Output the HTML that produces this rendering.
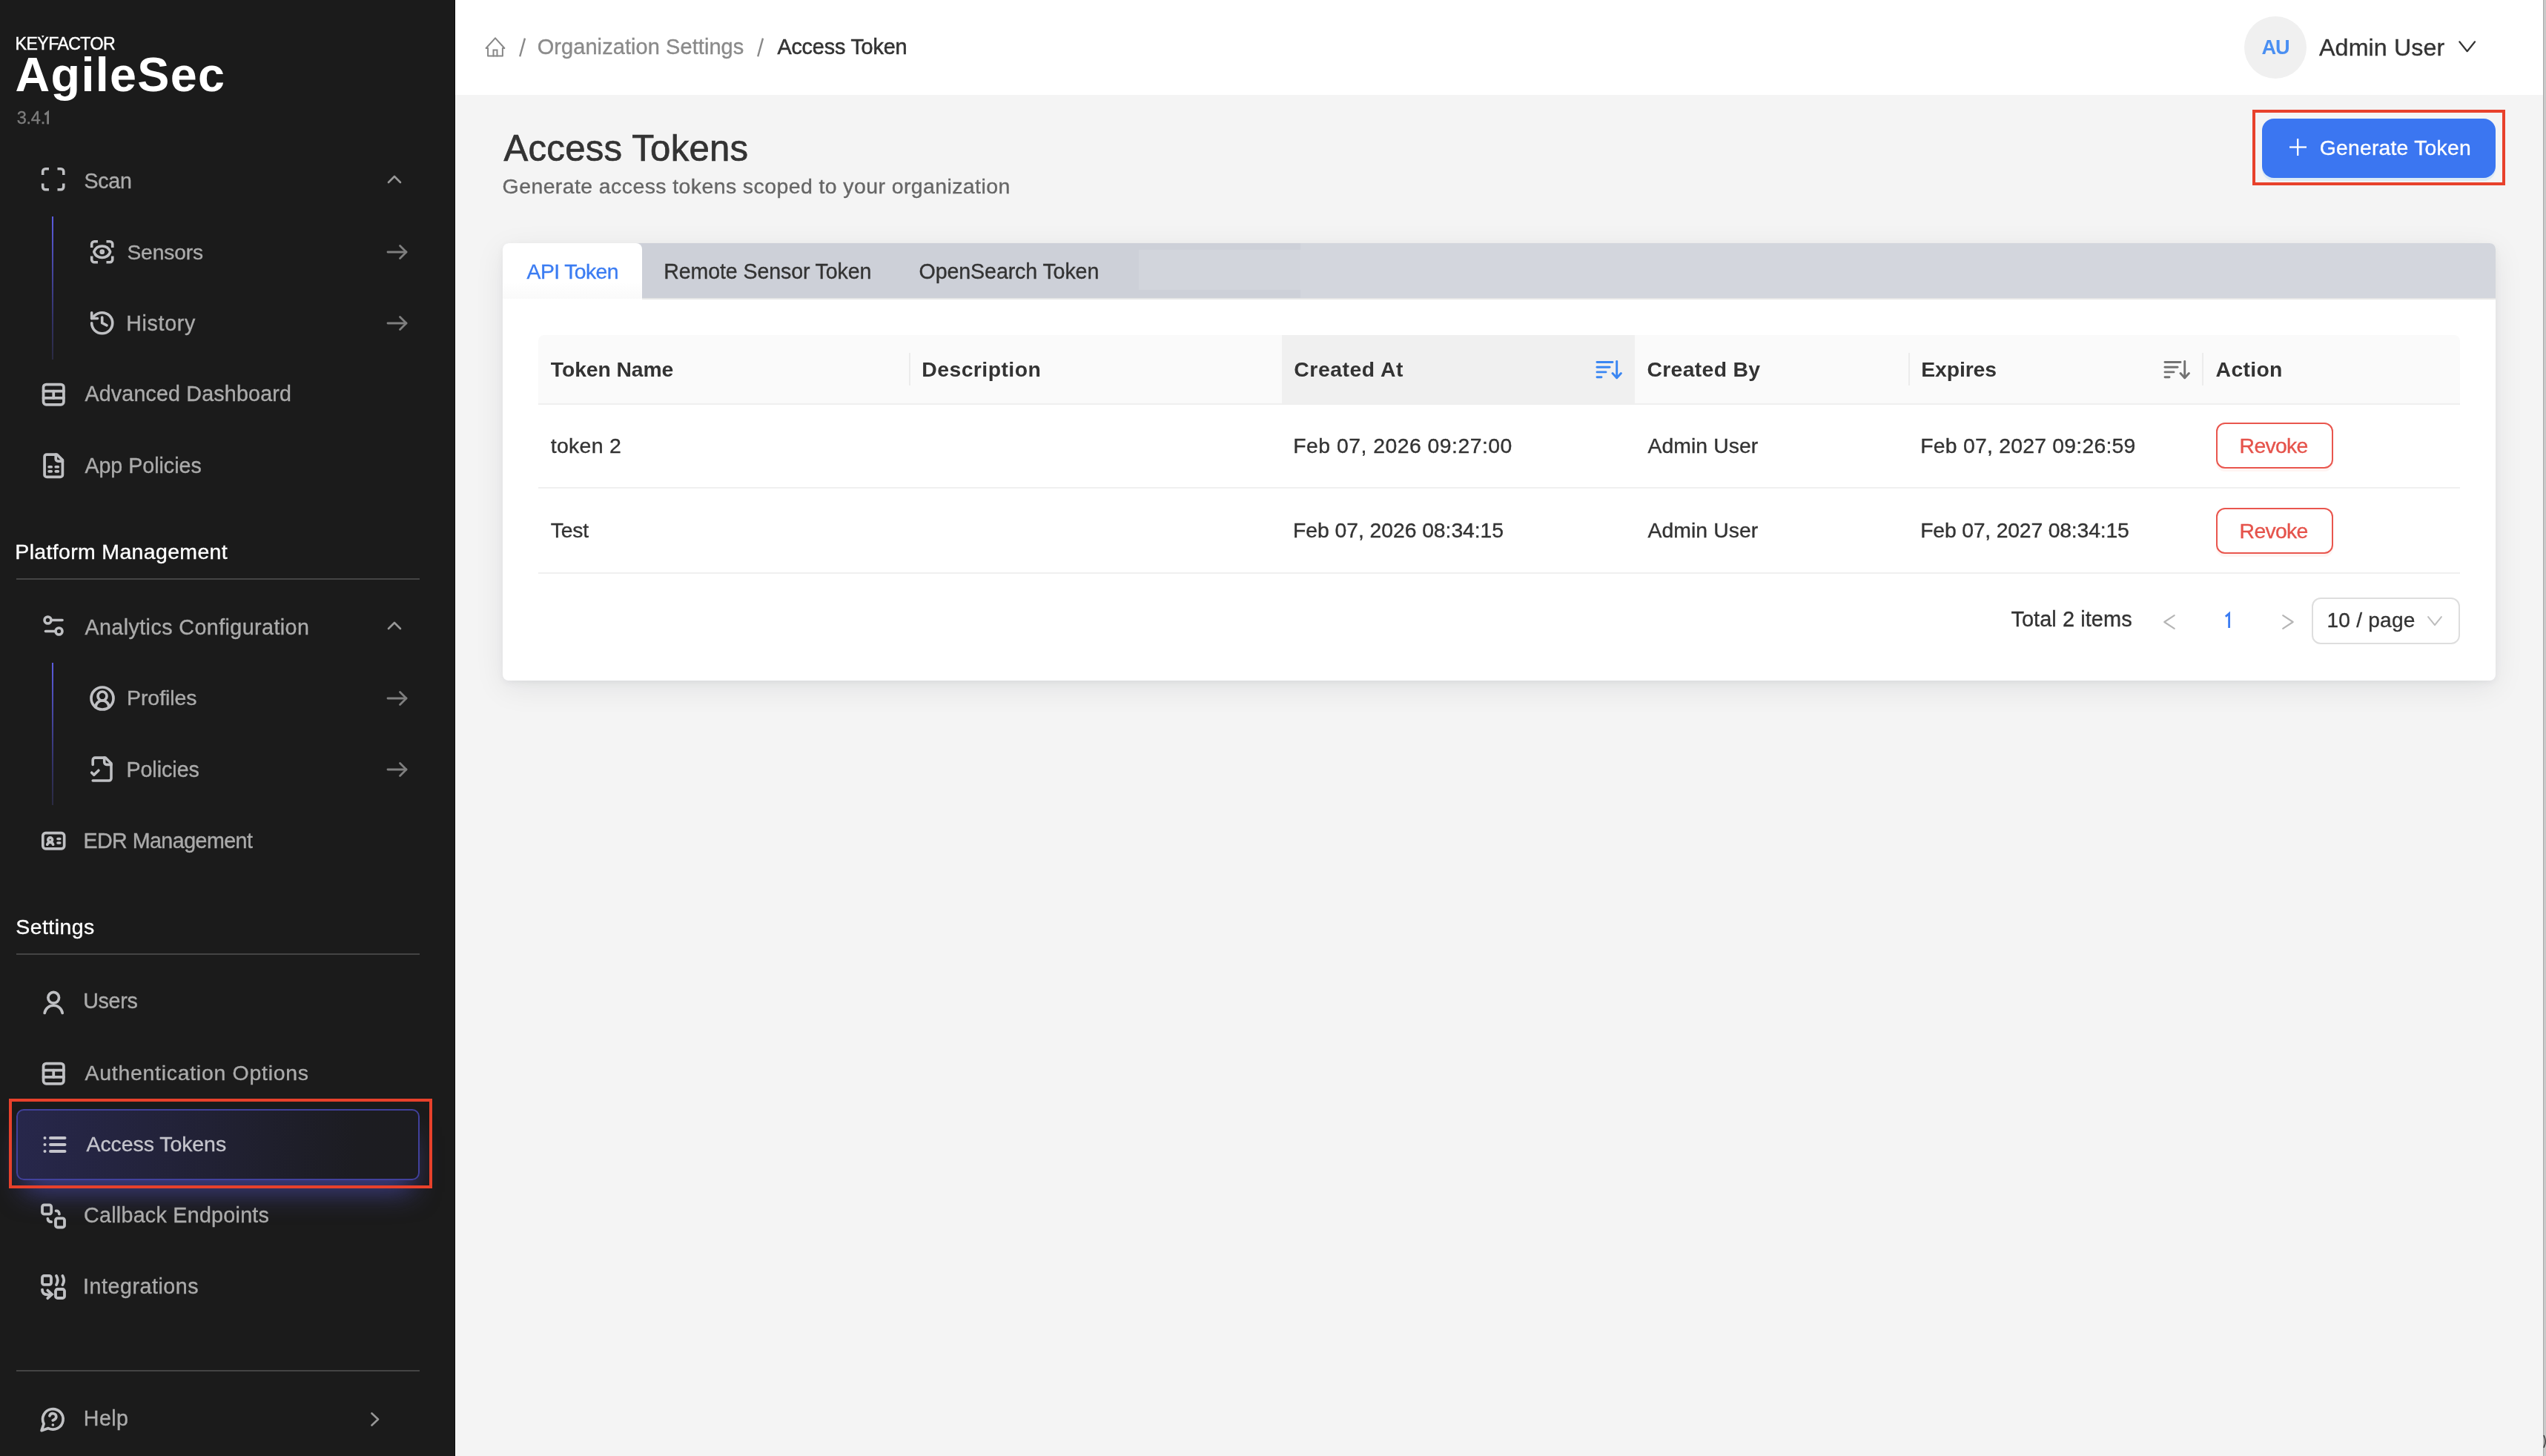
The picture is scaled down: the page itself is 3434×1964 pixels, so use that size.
<!DOCTYPE html>
<html><head><meta charset="utf-8">
<style>
html,body{margin:0;padding:0;width:3434px;height:1964px;overflow:hidden;background:#f4f4f4;font-family:"Liberation Sans",sans-serif;}
.abs{position:absolute;}
.tx{position:absolute;white-space:nowrap;font-family:"Liberation Sans",sans-serif;-webkit-text-stroke:0.35px currentColor;}
.b{-webkit-text-stroke:0;}
.med{-webkit-text-stroke:0.7px #333;}
.semi{-webkit-text-stroke:0.55px #333;}
.kf{-webkit-text-stroke:0.45px #fff;}
.ver{-webkit-text-stroke:0.35px #7d7d7d;}
.ic{position:absolute;overflow:visible;}
#sb{position:absolute;left:0;top:0;width:613px;height:1964px;background:#1b1b1b;border-right:1px solid #0c0c0c;}
#hdr{position:absolute;left:614px;top:0;width:2816px;height:128px;background:#ffffff;}
#scroll{position:absolute;left:3430px;top:0;width:4px;height:1964px;background:#c9c9c9;border-left:1px solid #a9a9a9;box-sizing:border-box;}
.vline{position:absolute;width:2px;}
.divider{position:absolute;left:22px;width:544px;height:2px;background:#444444;}
#active{position:absolute;left:22px;top:1496px;width:544px;height:96px;box-sizing:border-box;border:2px solid #41419c;border-radius:10px;
  background:linear-gradient(90deg,#27274b 0%,#222238 40%,#1c1c21 85%,#1c1c20 100%);box-shadow:0 26px 36px -10px rgba(90,90,220,0.55);}
.redbox{position:absolute;border:4px solid #e8412b;box-sizing:border-box;}
#card{position:absolute;left:678px;top:328px;width:2688px;height:590px;background:#fff;border-radius:8px;
  box-shadow:0 3px 10px rgba(10,20,40,0.05), 0 10px 40px rgba(10,20,40,0.08);}
#tabbar{position:absolute;left:678px;top:328px;width:2688px;height:74px;background:linear-gradient(90deg,#cdd0d8 0,#cdd0d8 1076px,#d3d6dd 1076px);border-radius:8px 8px 0 0;}
#tabline{position:absolute;left:866px;top:402px;width:2500px;height:2px;background:#e6e6e6;}
#tabact{position:absolute;left:678px;top:328px;width:188px;height:75px;background:linear-gradient(#fff 70%,#fafafa);border-radius:8px 8px 0 0;}
#tabfade{position:absolute;left:1536px;top:337px;width:218px;height:54px;background:#d2d5dc;}
#thead{position:absolute;left:726px;top:452px;width:2592px;height:92px;background:#fafafa;border-radius:8px 8px 0 0;border-bottom:2px solid #efefef;}
#sortcol{position:absolute;left:1729px;top:452px;width:476px;height:92px;background:#f0f0f0;}
.sep{position:absolute;top:476px;width:2px;height:44px;background:#ececec;}
.rowline{position:absolute;left:726px;width:2592px;height:2px;background:#f0f0f0;}
.revoke{position:absolute;left:2989px;width:158px;height:62px;box-sizing:border-box;border:2px solid #e9564e;border-radius:12px;background:#fff;box-shadow:0 4px 0 rgba(255,38,5,0.05);}
#btn{position:absolute;left:3051px;top:160px;width:315px;height:80px;background:#3b76f1;border-radius:16px;box-shadow:0 4px 0 rgba(5,145,255,0.1);}
#avatar{position:absolute;left:3027px;top:22px;width:84px;height:84px;border-radius:50%;background:#f0f0f0;}
#select{position:absolute;left:3118px;top:806px;width:200px;height:63px;box-sizing:border-box;border:2px solid #dedede;border-radius:12px;background:#fff;}
</style></head><body>
<div id="sb"></div>
<div id="hdr"></div>
<div id="scroll"></div>
<div class="vline" style="left:70px;top:292px;height:193px;background:linear-gradient(#5c5ce0,#33336a 70%,#2a2a40);"></div>
<div class="vline" style="left:70px;top:894px;height:192px;background:linear-gradient(#5c5ce0,#33336a 70%,#2a2a40);"></div>
<div class="divider" style="top:780px"></div>
<div class="divider" style="top:1286px"></div>
<div class="divider" style="top:1848px"></div>
<div id="active"></div>
<div class="redbox" style="left:12px;top:1482px;width:571px;height:121px"></div>
<div id="card"></div>
<div id="tabbar"></div>
<div id="tabfade"></div>
<div id="tabline"></div>
<div id="tabact"></div>
<div id="thead"></div>
<div id="sortcol"></div>
<div class="sep" style="left:1226px"></div>
<div class="sep" style="left:2574px"></div>
<div class="sep" style="left:2970px"></div>
<div class="rowline" style="top:657px"></div>
<div class="rowline" style="top:772px"></div>
<div class="revoke" style="top:570px"></div>
<div class="revoke" style="top:685px"></div>
<div id="select"></div>
<div id="btn"></div>
<div class="redbox" style="left:3038px;top:148px;width:341px;height:102px"></div>
<div id="avatar"></div>
<svg class="ic" style="left:53.28px;top:223.28px;width:37.44px;height:37.44px" viewBox="0 0 24 24" fill="none" stroke="#bfc0c3" stroke-width="2.3" stroke-linecap="round" stroke-linejoin="round"><path stroke-linecap="butt" d="M3 8.3V5.3a2.3 2.3 0 0 1 2.3-2.3h3"/><path stroke-linecap="butt" d="M15.7 3h3a2.3 2.3 0 0 1 2.3 2.3v3"/><path stroke-linecap="butt" d="M21 15.7v3a2.3 2.3 0 0 1-2.3 2.3h-3"/><path stroke-linecap="butt" d="M8.3 21H5.3a2.3 2.3 0 0 1-2.3-2.3v-3"/></svg>
<svg class="ic" style="left:119.28px;top:321.28px;width:37.44px;height:37.44px" viewBox="0 0 24 24" fill="none" stroke="#bfc0c3" stroke-width="2.3" stroke-linecap="round" stroke-linejoin="round"><path stroke-linecap="butt" d="M3 8.3V5.3a2.3 2.3 0 0 1 2.3-2.3h3"/><path stroke-linecap="butt" d="M15.7 3h3a2.3 2.3 0 0 1 2.3 2.3v3"/><path stroke-linecap="butt" d="M21 15.7v3a2.3 2.3 0 0 1-2.3 2.3h-3"/><path stroke-linecap="butt" d="M8.3 21H5.3a2.3 2.3 0 0 1-2.3-2.3v-3"/><circle cx="12" cy="12" r="1"/><path d="M18.944 12.33a1 1 0 0 0 0-.66 7.5 7.5 0 0 0-13.888 0 1 1 0 0 0 0 .66 7.5 7.5 0 0 0 13.888 0"/></svg>
<svg class="ic" style="left:119.28px;top:417.28px;width:37.44px;height:37.44px" viewBox="0 0 24 24" fill="none" stroke="#bfc0c3" stroke-width="2.3" stroke-linecap="round" stroke-linejoin="round"><path d="M3 12a9 9 0 1 0 9-9 9.75 9.75 0 0 0-6.74 2.74L3 8"/><path d="M3 3v5h5"/><path d="M12 7v5l4 2"/></svg>
<svg class="ic" style="left:53.76px;top:513.76px;width:36.48px;height:36.48px" viewBox="0 0 24 24" fill="none" stroke="#bfc0c3" stroke-width="2.45" stroke-linecap="round" stroke-linejoin="round"><rect x="3" y="3" width="18" height="18" rx="2.5"/><path d="M3 9h18"/><path d="M3 15h18"/><path d="M12 9v6"/></svg>
<svg class="ic" style="left:53.76px;top:609.76px;width:36.48px;height:36.48px" viewBox="0 0 24 24" fill="none" stroke="#bfc0c3" stroke-width="2.45" stroke-linecap="round" stroke-linejoin="round"><path d="M15 2H6a2 2 0 0 0-2 2v16a2 2 0 0 0 2 2h12a2 2 0 0 0 2-2V7Z"/><path d="M14 2v4a2 2 0 0 0 2 2h4"/><path d="M8 13h2"/><path d="M14 13h2"/><path d="M8 17h2"/><path d="M14 17h2"/></svg>
<svg class="ic" style="left:54.00px;top:826.00px;width:36.00px;height:36.00px" viewBox="0 0 24 24" fill="none" stroke="#bfc0c3" stroke-width="2.4" stroke-linecap="round" stroke-linejoin="round"><path d="M20 7h-9"/><path d="M14 17H5"/><circle cx="17" cy="17" r="3"/><circle cx="7" cy="7" r="3"/></svg>
<svg class="ic" style="left:120.00px;top:924.00px;width:36.00px;height:36.00px" viewBox="0 0 24 24" fill="none" stroke="#bfc0c3" stroke-width="2.45" stroke-linecap="round" stroke-linejoin="round"><path d="M18 20a6 6 0 0 0-12 0"/><circle cx="12" cy="10" r="4"/><circle cx="12" cy="12" r="10"/></svg>
<svg class="ic" style="left:119.00px;top:1019.40px;width:37.20px;height:37.20px" viewBox="0 0 24 24" fill="none" stroke="#bfc0c3" stroke-width="2.3" stroke-linecap="round" stroke-linejoin="round"><path d="M4 22h14a2 2 0 0 0 2-2V7l-5-5H6a2 2 0 0 0-2 2v4"/><path d="M14 2v4a2 2 0 0 0 2 2h4"/><path d="m3 15 2 2 4-4"/></svg>
<svg class="ic" style="left:53.76px;top:1115.76px;width:36.48px;height:36.48px" viewBox="0 0 24 24" fill="none" stroke="#bfc0c3" stroke-width="2.4" stroke-linecap="round" stroke-linejoin="round"><rect x="2.5" y="5" width="19" height="14" rx="2.5"/><circle cx="9" cy="11" r="1.9"/><path d="M6.4 15.3a2.7 2.7 0 0 1 5.2 0"/><path d="M15.8 10.2h1.8"/><path d="M15.8 13.8h1.8"/></svg>
<svg class="ic" style="left:52.80px;top:1332.80px;width:38.40px;height:38.40px" viewBox="0 0 24 24" fill="none" stroke="#bfc0c3" stroke-width="2.3" stroke-linecap="round" stroke-linejoin="round"><circle cx="12" cy="8" r="4.6"/><path d="M4.5 20.9a7.6 7.6 0 0 1 15 0"/></svg>
<svg class="ic" style="left:53.76px;top:1429.76px;width:36.48px;height:36.48px" viewBox="0 0 24 24" fill="none" stroke="#bfc0c3" stroke-width="2.45" stroke-linecap="round" stroke-linejoin="round"><rect x="3" y="3" width="18" height="18" rx="2.5"/><path d="M3 9h18"/><path d="M3 15h18"/><path d="M12 9v6"/></svg>
<svg class="ic" style="left:56.00px;top:1526.10px;width:36.00px;height:36.00px" viewBox="0 0 24 24" fill="none" stroke="#c4c4cc" stroke-width="2.7" stroke-linecap="round" stroke-linejoin="round"><path d="M3 6h.01"/><path d="M3 12h.01"/><path d="M3 18h.01"/><path d="M8 6h13"/><path d="M8 12h13"/><path d="M8 18h13"/></svg>
<svg class="ic" style="left:55px;top:1622.5px;width:34px;height:36px" viewBox="0 0 34 36" fill="none" stroke="#bfc0c3" stroke-width="3.8" stroke-linecap="round" stroke-linejoin="round"><rect x="2" y="2.3" width="12.2" height="12.3" rx="2.6"/><rect x="20" y="20.3" width="12" height="12.2" rx="2.6"/><path d="M20.6 10.4Q24.6 10 24.9 14.6"/><path d="M9.4 20.9Q9.8 25.2 14.1 25.2"/></svg>
<svg class="ic" style="left:55px;top:1717px;width:34px;height:36px" viewBox="0 0 34 36" fill="none" stroke="#bfc0c3" stroke-width="3.8" stroke-linecap="round" stroke-linejoin="round"><rect x="2" y="3.8" width="12" height="12" rx="2.6"/><rect x="20" y="22" width="12" height="12" rx="2.6"/><path d="M21 4Q24.6 10 21 16"/><path d="M29.4 4Q33 10 29.4 16"/><path d="M2 22.6Q2 29.4 9 29.4H13.5"/><path d="M9.3 23.6L15 28.9L9.3 34.2" stroke-linejoin="miter"/></svg>
<svg class="ic" style="left:53.44px;top:1896.14px;width:36.72px;height:36.72px" viewBox="0 0 24 24" fill="none" stroke="#bfc0c3" stroke-width="2.4" stroke-linecap="round" stroke-linejoin="round"><path d="M7.9 20A9 9 0 1 0 4 16.1L2 22Z"/><path d="M9.09 9a3 3 0 0 1 5.83 1c0 2-3 3-3 3"/><path d="M12 17h.01"/></svg>
<svg class="ic" style="left:521px;top:234px;width:22px;height:16px" viewBox="0 0 22 16" fill="none" stroke="#979797" stroke-width="2.6" stroke-linecap="round" stroke-linejoin="round"><path d="M3 12 L11 4 L19 12"/></svg>
<svg class="ic" style="left:521px;top:836px;width:22px;height:16px" viewBox="0 0 22 16" fill="none" stroke="#979797" stroke-width="2.6" stroke-linecap="round" stroke-linejoin="round"><path d="M3 12 L11 4 L19 12"/></svg>
<svg class="ic" style="left:521px;top:329px;width:30px;height:22px" viewBox="0 0 30 22" fill="none" stroke="#7f7f7f" stroke-width="2.8" stroke-linecap="round" stroke-linejoin="round"><path d="M2 11H27"/><path d="M18.5 2.5L27 11l-8.5 8.5"/></svg>
<svg class="ic" style="left:521px;top:425px;width:30px;height:22px" viewBox="0 0 30 22" fill="none" stroke="#7f7f7f" stroke-width="2.8" stroke-linecap="round" stroke-linejoin="round"><path d="M2 11H27"/><path d="M18.5 2.5L27 11l-8.5 8.5"/></svg>
<svg class="ic" style="left:521px;top:931px;width:30px;height:22px" viewBox="0 0 30 22" fill="none" stroke="#7f7f7f" stroke-width="2.8" stroke-linecap="round" stroke-linejoin="round"><path d="M2 11H27"/><path d="M18.5 2.5L27 11l-8.5 8.5"/></svg>
<svg class="ic" style="left:521px;top:1027px;width:30px;height:22px" viewBox="0 0 30 22" fill="none" stroke="#7f7f7f" stroke-width="2.8" stroke-linecap="round" stroke-linejoin="round"><path d="M2 11H27"/><path d="M18.5 2.5L27 11l-8.5 8.5"/></svg>
<svg class="ic" style="left:499px;top:1904px;width:14px;height:21px" viewBox="0 0 14 21" fill="none" stroke="#979797" stroke-width="2.6" stroke-linecap="round" stroke-linejoin="round"><path d="M2.5 2.5L11 10.5L2.5 18.5"/></svg>
<svg class="ic" style="left:654px;top:50px;width:28px;height:27px" viewBox="0 0 28 27" fill="none" stroke="#888888" stroke-width="2.0" stroke-linecap="round" stroke-linejoin="round"><path d="M1.6 15 L14 1.3 L26.4 15 H23.9 V25.4 H4.1 V15 Z"/><path d="M11.5 25.4 V17.5 H16.5 V25.4" stroke-linejoin="miter"/></svg>
<svg class="ic" style="left:698.5px;top:50.5px;width:11px;height:26px" viewBox="0 0 11 26" fill="none" stroke="#888888" stroke-width="2.4" stroke-linecap="round" stroke-linejoin="round"><path stroke-linecap="butt" d="M9 0.6 L2.2 25.2"/></svg>
<svg class="ic" style="left:1019.8px;top:50.5px;width:11px;height:26px" viewBox="0 0 11 26" fill="none" stroke="#888888" stroke-width="2.4" stroke-linecap="round" stroke-linejoin="round"><path stroke-linecap="butt" d="M9 0.6 L2.2 25.2"/></svg>
<svg class="ic" style="left:3316px;top:54.5px;width:24px;height:17px" viewBox="0 0 24 17" fill="none" stroke="#333" stroke-width="2.2" stroke-linecap="round" stroke-linejoin="round"><path d="M1.3 1.3 L11.7 14.2 L22.1 1.3"/></svg>
<svg class="ic" style="left:3087.5px;top:187.2px;width:23px;height:23px" viewBox="0 0 23 23" fill="none" stroke="#fff" stroke-width="2.3" stroke-linecap="round" stroke-linejoin="round"><path stroke-linecap="butt" d="M11.2 0V23"/><path stroke-linecap="butt" d="M0 11.5H23"/></svg>
<svg class="ic" style="left:2152px;top:486px;width:37px;height:26px" viewBox="0 0 37 26" fill="none" stroke="#3a86f2" stroke-width="2.9" stroke-linecap="round" stroke-linejoin="round"><path d="M2 2.5H23"/><path d="M2 9.3H19"/><path d="M2 15.9H14"/><path d="M2 22.7H8"/><path d="M28.7 1.5V23.5"/><path d="M23 17.5L28.7 23.8L34.4 17.5"/></svg>
<svg class="ic" style="left:2918px;top:486px;width:37px;height:26px" viewBox="0 0 37 26" fill="none" stroke="#727272" stroke-width="2.9" stroke-linecap="round" stroke-linejoin="round"><path d="M2 2.5H23"/><path d="M2 9.3H19"/><path d="M2 15.9H14"/><path d="M2 22.7H8"/><path d="M28.7 1.5V23.5"/><path d="M23 17.5L28.7 23.8L34.4 17.5"/></svg>
<svg class="ic" style="left:2917.8px;top:829px;width:16px;height:20px" viewBox="0 0 16 20" fill="none" stroke="#b5b5b5" stroke-width="2.1" stroke-linecap="round" stroke-linejoin="round"><path d="M14.7 1.1L1.2 10L14.7 18.9"/></svg>
<svg class="ic" style="left:3078px;top:829px;width:16px;height:20px" viewBox="0 0 16 20" fill="none" stroke="#b5b5b5" stroke-width="2.1" stroke-linecap="round" stroke-linejoin="round"><path d="M1.2 1.1L14.7 10L1.2 18.9"/></svg>
<svg class="ic" style="left:3274.2px;top:831px;width:20px;height:14px" viewBox="0 0 20 14" fill="none" stroke="#bdbdbd" stroke-width="2.0" stroke-linecap="round" stroke-linejoin="round"><path d="M1.1 1.1L10 12.2L18.9 1.1"/></svg>
<svg class="ic" style="left:2999.5px;top:826px;width:10px;height:22px" viewBox="0 0 10 22" fill="none" stroke="#3b7cf2" stroke-width="2.8" stroke-linecap="round" stroke-linejoin="round"><path stroke-linecap="butt" stroke-linejoin="miter" d="M1.8 5.8 L6.6 1.6 V21"/></svg>
<svg class="ic" style="left:55px;top:47px;width:6px;height:6px" viewBox="0 0 6 6"><path d="M0.9 0.9H4.6L2.75 3.9Z" fill="#fff"/></svg>
<svg class="ic" style="left:59.0px;top:149.8px;width:8px;height:20px" viewBox="0 0 8 20" fill="none" stroke="#7d7d7d" stroke-width="2.8" stroke-linecap="round" stroke-linejoin="round"><path stroke-linecap="butt" stroke-linejoin="miter" d="M1.4 4.6 L5.6 1.4 V17.4"/></svg>
<svg class="ic" style="left:3429.5px;top:1934.5px;width:6px;height:19px" viewBox="0 0 6 19" fill="none" stroke="#3a3a3a" stroke-width="1.6" stroke-linecap="round" stroke-linejoin="round"><path d="M1.2 1.5 Q5 9.2 1.2 17.2"/></svg>
<div id="txtlayer" style="position:absolute;left:0;top:0;width:3434px;height:1964px;will-change:transform;">
<span class="tx kf" style="left:20.6px;top:47.58px;font-size:23.18px;line-height:23.18px;color:#ffffff;letter-spacing:-0.611px;">KEYFACTOR</span>
<span class="tx b" style="left:20.6px;top:69.27px;font-size:64.66px;line-height:64.66px;color:#ffffff;font-weight:700;letter-spacing:1.32px;">AgileSec</span>
<span class="tx ver" style="left:22.7px;top:148.21px;font-size:23.5px;line-height:23.5px;color:#7d7d7d;letter-spacing:-0.223px;">3.4.</span>
<span class="tx" style="left:113.4px;top:229.76px;font-size:28.63px;line-height:28.63px;color:#ababab;letter-spacing:-0.242px;">Scan</span>
<span class="tx" style="left:171.4px;top:325.82px;font-size:28.21px;line-height:28.21px;color:#ababab;letter-spacing:-0.127px;">Sensors</span>
<span class="tx" style="left:170.2px;top:421.76px;font-size:28.63px;line-height:28.63px;color:#ababab;letter-spacing:0.675px;">History</span>
<span class="tx" style="left:114.4px;top:517.26px;font-size:28.63px;line-height:28.63px;color:#ababab;letter-spacing:0.189px;">Advanced Dashboard</span>
<span class="tx" style="left:114.4px;top:613.76px;font-size:28.63px;line-height:28.63px;color:#ababab;letter-spacing:-0.019px;">App Policies</span>
<span class="tx" style="left:20.3px;top:729.88px;font-size:28.49px;line-height:28.49px;color:#ffffff;letter-spacing:0.344px;">Platform Management</span>
<span class="tx" style="left:114.4px;top:831.76px;font-size:28.63px;line-height:28.63px;color:#ababab;letter-spacing:0.443px;">Analytics Configuration</span>
<span class="tx" style="left:171px;top:926.88px;font-size:28.49px;line-height:28.49px;color:#ababab;letter-spacing:-0.063px;">Profiles</span>
<span class="tx" style="left:170.4px;top:1023.76px;font-size:28.63px;line-height:28.63px;color:#ababab;letter-spacing:-0.018px;">Policies</span>
<span class="tx" style="left:112.4px;top:1119.76px;font-size:28.63px;line-height:28.63px;color:#ababab;letter-spacing:-0.532px;">EDR Management</span>
<span class="tx" style="left:21.3px;top:1235.88px;font-size:28.49px;line-height:28.49px;color:#ffffff;letter-spacing:0.431px;">Settings</span>
<span class="tx" style="left:112.2px;top:1336.26px;font-size:28.63px;line-height:28.63px;color:#ababab;letter-spacing:-0.284px;">Users</span>
<span class="tx" style="left:114.5px;top:1433.08px;font-size:28.49px;line-height:28.49px;color:#ababab;letter-spacing:0.711px;">Authentication Options</span>
<span class="tx" style="left:116.5px;top:1529.08px;font-size:28.49px;line-height:28.49px;color:#c4c4cc;letter-spacing:-0.069px;">Access Tokens</span>
<span class="tx" style="left:113px;top:1625.06px;font-size:28.63px;line-height:28.63px;color:#ababab;letter-spacing:0.286px;">Callback Endpoints</span>
<span class="tx" style="left:112px;top:1720.56px;font-size:28.63px;line-height:28.63px;color:#ababab;letter-spacing:0.548px;">Integrations</span>
<span class="tx" style="left:112.8px;top:1898.76px;font-size:28.63px;line-height:28.63px;color:#ababab;letter-spacing:0.416px;">Help</span>
<span class="tx" style="left:724.7px;top:49.25px;font-size:29px;line-height:29px;color:#8a8a8a;letter-spacing:0.066px;">Organization Settings</span>
<span class="tx semi" style="left:1048.4px;top:49.42px;font-size:28.8px;line-height:28.8px;color:#333333;letter-spacing:-0.186px;">Access Token</span>
<span class="tx b" style="left:3050.6px;top:49.88px;font-size:27.2px;line-height:27.2px;color:#4a8ff2;font-weight:700;letter-spacing:-1.234px;">AU</span>
<span class="tx" style="left:3128px;top:47.69px;font-size:32.26px;line-height:32.26px;color:#333333;letter-spacing:0.097px;">Admin User</span>
<span class="tx med" style="left:679.5px;top:175.19px;font-size:49.16px;line-height:49.16px;color:#333333;letter-spacing:0.228px;">Access Tokens</span>
<span class="tx" style="left:677.6px;top:236.68px;font-size:28.49px;line-height:28.49px;color:#666666;letter-spacing:0.4px;">Generate access tokens scoped to your organization</span>
<span class="tx" style="left:3128.7px;top:185.1px;font-size:28.35px;line-height:28.35px;color:#ffffff;letter-spacing:0.214px;">Generate Token</span>
<span class="tx" style="left:710.6px;top:351.8px;font-size:28.35px;line-height:28.35px;color:#3b7cf2;letter-spacing:-0.591px;">API Token</span>
<span class="tx" style="left:895.3px;top:351.59px;font-size:28.6px;line-height:28.6px;color:#333333;letter-spacing:-0.128px;">Remote Sensor Token</span>
<span class="tx" style="left:1239.6px;top:351.59px;font-size:28.6px;line-height:28.6px;color:#333333;letter-spacing:-0.106px;">OpenSearch Token</span>
<span class="tx b" style="left:742.8px;top:483.5px;font-size:28.35px;line-height:28.35px;color:#333333;font-weight:700;letter-spacing:-0.097px;">Token Name</span>
<span class="tx b" style="left:1243.3px;top:483.5px;font-size:28.35px;line-height:28.35px;color:#333333;font-weight:700;letter-spacing:0.45px;">Description</span>
<span class="tx b" style="left:1745.3px;top:483.5px;font-size:28.35px;line-height:28.35px;color:#333333;font-weight:700;letter-spacing:0.546px;">Created At</span>
<span class="tx b" style="left:2221.4px;top:483.5px;font-size:28.35px;line-height:28.35px;color:#333333;font-weight:700;letter-spacing:0.335px;">Created By</span>
<span class="tx b" style="left:2591.2px;top:483.5px;font-size:28.35px;line-height:28.35px;color:#333333;font-weight:700;letter-spacing:-0.092px;">Expires</span>
<span class="tx b" style="left:2988.6px;top:483.5px;font-size:28.35px;line-height:28.35px;color:#333333;font-weight:700;letter-spacing:0.328px;">Action</span>
<span class="tx" style="left:742.8px;top:587.18px;font-size:28.49px;line-height:28.49px;color:#333333;letter-spacing:0.251px;">token 2</span>
<span class="tx" style="left:1744.3px;top:587.3px;font-size:28.35px;line-height:28.35px;color:#333333;letter-spacing:0.486px;">Feb 07, 2026 09:27:00</span>
<span class="tx" style="left:2222.4px;top:587.3px;font-size:28.35px;line-height:28.35px;color:#333333;letter-spacing:0.087px;">Admin User</span>
<span class="tx" style="left:2590.2px;top:587.3px;font-size:28.35px;line-height:28.35px;color:#333333;letter-spacing:0.246px;">Feb 07, 2027 09:26:59</span>
<span class="tx" style="left:3020.6px;top:587.4px;font-size:28.35px;line-height:28.35px;color:#e5534b;letter-spacing:-0.668px;">Revoke</span>
<span class="tx" style="left:742.8px;top:700.9px;font-size:28.35px;line-height:28.35px;color:#333333;letter-spacing:-0.202px;">Test</span>
<span class="tx" style="left:1744px;top:700.9px;font-size:28.35px;line-height:28.35px;color:#333333;letter-spacing:-0.059px;">Feb 07, 2026 08:34:15</span>
<span class="tx" style="left:2222.4px;top:700.9px;font-size:28.35px;line-height:28.35px;color:#333333;letter-spacing:0.087px;">Admin User</span>
<span class="tx" style="left:2590.2px;top:700.9px;font-size:28.35px;line-height:28.35px;color:#333333;letter-spacing:-0.184px;">Feb 07, 2027 08:34:15</span>
<span class="tx" style="left:3020.6px;top:701.5px;font-size:28.35px;line-height:28.35px;color:#e5534b;letter-spacing:-0.668px;">Revoke</span>
<span class="tx" style="left:2712.4px;top:821.13px;font-size:28.91px;line-height:28.91px;color:#333333;letter-spacing:0.083px;">Total 2 items</span>
<span class="tx" style="left:3138.5px;top:822.84px;font-size:28.07px;line-height:28.07px;color:#333333;letter-spacing:0.234px;">10 / page</span>
</div>
</body></html>
